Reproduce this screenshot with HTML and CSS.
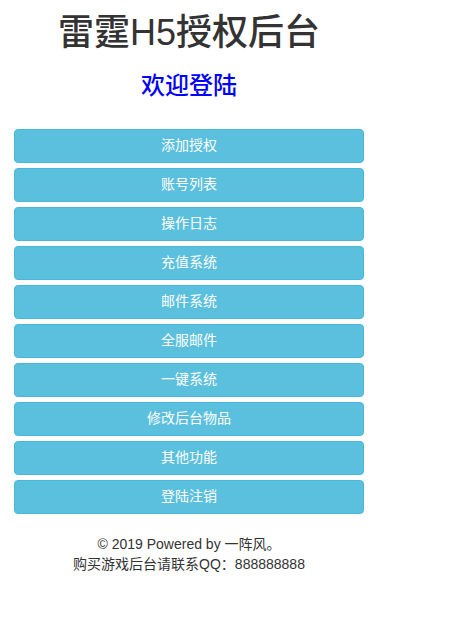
FILE: index.html
```html
<!DOCTYPE html>
<html lang="zh-CN">
<head>
<meta charset="utf-8">
<title>雷霆H5授权后台</title>
<link rel="stylesheet" href="styles.css">
</head>
<body>
<div class="wrap">
  <h1 class="title">雷霆H5授权后台</h1>
  <h2 class="welcome">欢迎登陆</h2>
  <nav class="menu">
    <a class="btn" href="#">添加授权</a>
    <a class="btn" href="#">账号列表</a>
    <a class="btn" href="#">操作日志</a>
    <a class="btn" href="#">充值系统</a>
    <a class="btn" href="#">邮件系统</a>
    <a class="btn" href="#">全服邮件</a>
    <a class="btn" href="#">一键系统</a>
    <a class="btn" href="#">修改后台物品</a>
    <a class="btn" href="#">其他功能</a>
    <a class="btn" href="#">登陆注销</a>
  </nav>
  <footer class="footer">
    <p>© 2019 Powered by 一阵风。</p>
    <p>购买游戏后台请联系QQ：888888888</p>
  </footer>
</div>
</body>
</html>
```
FILE: styles.css
```css
html, body {
  margin: 0;
  padding: 0;
  background: #fff;
}
body {
  font-family: "Liberation Sans", Arial, "Noto Sans CJK SC", sans-serif;
  font-size: 14px;
  line-height: 1.42857;
  color: #333;
}
.wrap {
  width: 350px;
  margin-left: 14px;
}
.title {
  margin: 13px 0 0;
  font-size: 36px;
  font-weight: 500;
  line-height: 1.1;
  text-align: center;
  color: #333;
}
.welcome {
  margin: 20px 0 0;
  font-size: 24px;
  font-weight: 500;
  line-height: 1.1;
  text-align: center;
  color: #0000ff;
}
.menu {
  display: flex;
  flex-direction: column;
  gap: 5px;
  margin-top: 30px;
}
.btn {
  display: flex;
  align-items: center;
  justify-content: center;
  height: 34px;
  box-sizing: border-box;
  border: 1px solid #46b8da;
  border-radius: 4px;
  background: #5bc0de;
  color: #fff;
  font-size: 14px;
  text-decoration: none;
}
.footer {
  margin-top: 20px;
  text-align: center;
}
.footer p {
  margin: 0;
  line-height: 20px;
}
```
